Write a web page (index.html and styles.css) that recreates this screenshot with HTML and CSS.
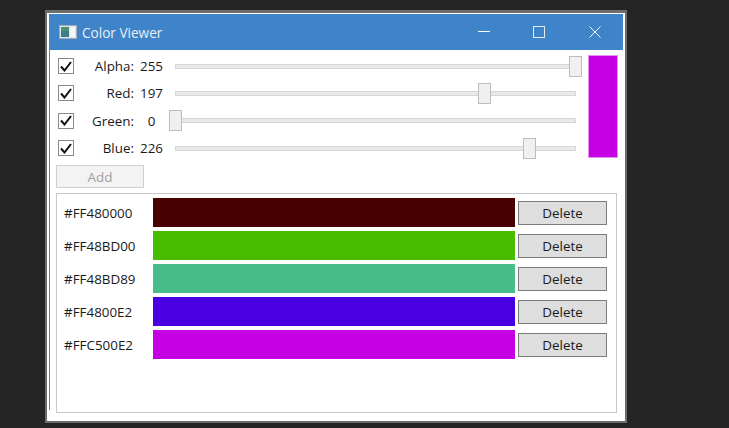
FILE: index.html
```html
<!DOCTYPE html>
<html lang="en">
<head>
<meta charset="utf-8">
<title>Color Viewer</title>
<link rel="stylesheet" href="styles.css">
</head>
<body>
<div class="window">
  <div class="inner">
    <header class="titlebar">
      <svg class="app-icon" width="18" height="14" viewBox="0 0 18 14">
        <rect x="0.5" y="0.5" width="17" height="13" fill="#dfe4e7" stroke="#a4aeb6"/>
        <rect x="2" y="2" width="8" height="10" fill="#3d7f8a"/>
        <rect x="2" y="2" width="8" height="4" fill="#4f8f72"/>
        <rect x="11" y="2" width="5" height="10" fill="#f4f6f7"/>
      </svg>
      <span class="title">Color Viewer</span>
      <div class="controls">
        <svg class="ctl ctl-min" width="12" height="12" viewBox="0 0 12 12"><path d="M0 5.5H12" stroke="#fff" stroke-width="1"/></svg>
        <svg class="ctl ctl-max" width="12" height="12" viewBox="0 0 12 12"><rect x="0.5" y="0.5" width="11" height="11" fill="none" stroke="#e2ecf7"/></svg>
        <svg class="ctl ctl-close" width="12" height="12" viewBox="0 0 12 12"><path d="M0.5 0.5L11.5 11.5M11.5 0.5L0.5 11.5" stroke="#f2f6fb" stroke-width="1"/></svg>
      </div>
    </header>
    <main class="content">
      <section class="top">
        <div class="rows">
          <div class="row">
            <span class="check"><svg width="12" height="11" viewBox="0 0 12 11"><path d="M1 5.5L4.5 9.5L11 1" fill="none" stroke="#111" stroke-width="2"/></svg></span>
            <span class="label">Alpha:</span><span class="value">255</span>
            <div class="slider"><span class="thumb" style="left:393px"></span></div>
          </div>
          <div class="row">
            <span class="check"><svg width="12" height="11" viewBox="0 0 12 11"><path d="M1 5.5L4.5 9.5L11 1" fill="none" stroke="#111" stroke-width="2"/></svg></span>
            <span class="label">Red:</span><span class="value">197</span>
            <div class="slider"><span class="thumb" style="left:302px"></span></div>
          </div>
          <div class="row">
            <span class="check"><svg width="12" height="11" viewBox="0 0 12 11"><path d="M1 5.5L4.5 9.5L11 1" fill="none" stroke="#111" stroke-width="2"/></svg></span>
            <span class="label">Green:</span><span class="value">0</span>
            <div class="slider"><span class="thumb" style="left:-7px"></span></div>
          </div>
          <div class="row">
            <span class="check"><svg width="12" height="11" viewBox="0 0 12 11"><path d="M1 5.5L4.5 9.5L11 1" fill="none" stroke="#111" stroke-width="2"/></svg></span>
            <span class="label">Blue:</span><span class="value">226</span>
            <div class="slider"><span class="thumb" style="left:347px"></span></div>
          </div>
        </div>
        <div class="preview"></div>
      </section>
      <button class="add" disabled>Add</button>
      <section class="list">
        <div class="item"><span class="hex">#FF480000</span><span class="swatch" style="background:#480000"></span><button class="del">Delete</button></div>
        <div class="item"><span class="hex">#FF48BD00</span><span class="swatch" style="background:#48bd00"></span><button class="del">Delete</button></div>
        <div class="item"><span class="hex">#FF48BD89</span><span class="swatch" style="background:#48bd89"></span><button class="del">Delete</button></div>
        <div class="item"><span class="hex">#FF4800E2</span><span class="swatch" style="background:#4800e2"></span><button class="del">Delete</button></div>
        <div class="item"><span class="hex">#FFC500E2</span><span class="swatch" style="background:#c500e2"></span><button class="del">Delete</button></div>
      </section>
    </main>
  </div>
</div>
</body>
</html>
```
FILE: styles.css
```css
* { box-sizing: border-box; }
html, body { margin: 0; height: 100%; overflow: hidden; }
body {
  background: #252525;
  padding: 10px 0 0 45px;
  font-family: "Open Sans", "Noto Sans", sans-serif;
  font-size: 13.4px;
  color: #1a1a1a;
}
.window {
  width: 582px;
  height: 413px;
  border: 2px solid #6d6d6d;
  border-top-width: 3px;
  background: #fff;
  padding: 1px 2px 0;
}
.inner {
  height: 396px;
  border-left: 1px solid #3f83c9;
  display: flex;
  flex-direction: column;
}
.titlebar {
  height: 36px;
  flex: none;
  background: #3f83c9;
  color: #e8f0f8;
  display: flex;
  align-items: center;
  padding-left: 10px;
  margin-left: -1px;
  font-size: 13.6px;
}
.app-icon { flex: none; margin-right: 5px; }
.title { flex: 1; }
.controls { display: flex; align-items: center; height: 100%; }
.ctl { display: block; flex: none; }
.ctl-min { margin-right: 43px; }
.ctl-max { margin-right: 44px; }
.ctl-close { margin-right: 22px; }
.content {
  flex: 1;
  display: flex;
  flex-direction: column;
  padding: 5px 5px 8px 6px;
}
.top { display: flex; height: 109px; flex: none; }
.rows { width: 530px; }
.row {
  display: flex;
  align-items: center;
  height: 27.33px;
  margin-left: 1.5px;
}
.row:first-child { margin-top: -2.5px; }
.check {
  width: 16px;
  height: 16px;
  border: 1.5px solid #8a8a8a;
  background: #fff;
  display: flex;
  align-items: center;
  justify-content: center;
  flex: none;
}
.label { width: 60.5px; text-align: right; flex: none; }
.value { width: 23px; margin-left: 6px; margin-right: 12px; text-align: center; flex: none; }
.slider {
  position: relative;
  width: 401px;
  height: 5px;
  flex: none;
  background: #e7eaea;
  border: 1px solid #d6d6d6;
}
.thumb {
  position: absolute;
  top: -9px;
  width: 13px;
  height: 21px;
  background: #f0f0f0;
  border: 1px solid #bcbcbc;
}
.preview {
  width: 30px;
  height: 103px;
  margin-left: 2.5px;
  background: #c500e2;
  border: 0.5px solid #e98cf3;
}
.add {
  width: 88px;
  height: 23px;
  flex: none;
  margin-top: 1px;
  font: inherit;
  color: #a0a0a0;
  background: #f3f3f3;
  border: 1px solid #cfcfcf;
  padding: 0;
}
.list {
  margin-top: 5px;
  width: 561px;
  height: 220px;
  flex: none;
  border: 1px solid #c8c8c8;
  padding: 4px 9px 0 7px;
}
.item {
  display: flex;
  align-items: center;
  height: 29px;
  margin-bottom: 4px;
}
.hex { width: 89px; flex: none; }
.swatch { width: 362px; height: 29px; flex: none; }
.del {
  width: 89px;
  height: 24px;
  margin: 1px 0 0 3px;
  flex: none;
  font: inherit;
  color: #1a1a1a;
  background: #dedede;
  border: 1px solid #7c7c7c;
  padding: 0;
}
```
